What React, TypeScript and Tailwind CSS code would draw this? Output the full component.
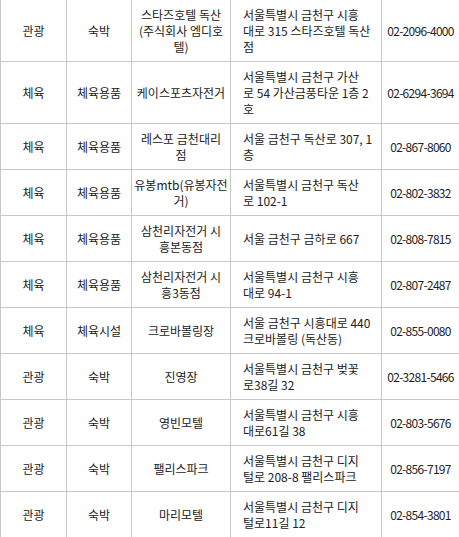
import React from "react";

type Row = [string, string, string[], string[], string];

const rows: Row[] = [
  ["관광", "숙박", ["스타즈호텔 독산", "(주식회사 엠디호", "텔)"], ["서울특별시 금천구 시흥", "대로 315 스타즈호텔 독산", "점"], "02-2096-4000"],
  ["체육", "체육용품", ["케이스포츠자전거"], ["서울특별시 금천구 가산", "로 54 가산금풍타운 1층 2", "호"], "02-6294-3694"],
  ["체육", "체육용품", ["레스포 금천대리", "점"], ["서울 금천구 독산로 307, 1", "층"], "02-867-8060"],
  ["체육", "체육용품", ["유봉mtb(유봉자전", "거)"], ["서울특별시 금천구 독산", "로 102-1"], "02-802-3832"],
  ["체육", "체육용품", ["삼천리자전거 시", "흥본동점"], ["서울 금천구 금하로 667"], "02-808-7815"],
  ["체육", "체육용품", ["삼천리자전거 시", "흥3동점"], ["서울특별시 금천구 시흥", "대로 94-1"], "02-807-2487"],
  ["체육", "체육시설", ["크로바볼링장"], ["서울 금천구 시흥대로 440", "크로바볼링 (독산동)"], "02-855-0080"],
  ["관광", "숙박", ["진영장"], ["서울특별시 금천구 벚꽃", "로38길 32"], "02-3281-5466"],
  ["관광", "숙박", ["영빈모텔"], ["서울특별시 금천구 시흥", "대로61길 38"], "02-803-5676"],
  ["관광", "숙박", ["팰리스파크"], ["서울특별시 금천구 디지", "털로 208-8 팰리스파크"], "02-856-7197"],
  ["관광", "숙박", ["마리모텔"], ["서울특별시 금천구 디지", "털로11길 12"], "02-854-3801"],
];

function Lines({ lines }: { lines: string[] }) {
  return (
    <div>
      {lines.map((l, i) => (
        <div key={i} className="whitespace-nowrap">
          {l}
        </div>
      ))}
    </div>
  );
}

export default function App() {
  return (
    <div
      className="w-[459px] h-[537px] overflow-hidden bg-white text-[#222] text-[12px] leading-[16px]"
      style={{ fontFamily: '"Noto Sans CJK KR", "Noto Sans", sans-serif' }}
    >
      {rows.map((r, i) => (
        <div key={i} className="flex border-b border-[#c8c8c8]">
          <div className="w-[66px] shrink-0 border-l border-[#c8c8c8] flex items-center justify-center pt-[7px] pb-[6px]">
            {r[0]}
          </div>
          <div className="w-[65px] shrink-0 border-l border-[#c8c8c8] flex items-center justify-center pt-[7px] pb-[6px]">
            {r[1]}
          </div>
          <div className="w-[99px] shrink-0 border-l border-[#c8c8c8] flex items-center justify-center text-center pt-[7px] pb-[6px]">
            <Lines lines={r[2]} />
          </div>
          <div className="w-[151px] shrink-0 border-l border-[#c8c8c8] flex items-center pl-[12px] pt-[7px] pb-[6px]">
            <Lines lines={r[3]} />
          </div>
          <div className="w-[78px] shrink-0 border-l border-[#c8c8c8] flex items-center justify-center whitespace-nowrap tracking-[-0.7px] pt-[7px] pb-[6px]">
            {r[4]}
          </div>
        </div>
      ))}
    </div>
  );
}
